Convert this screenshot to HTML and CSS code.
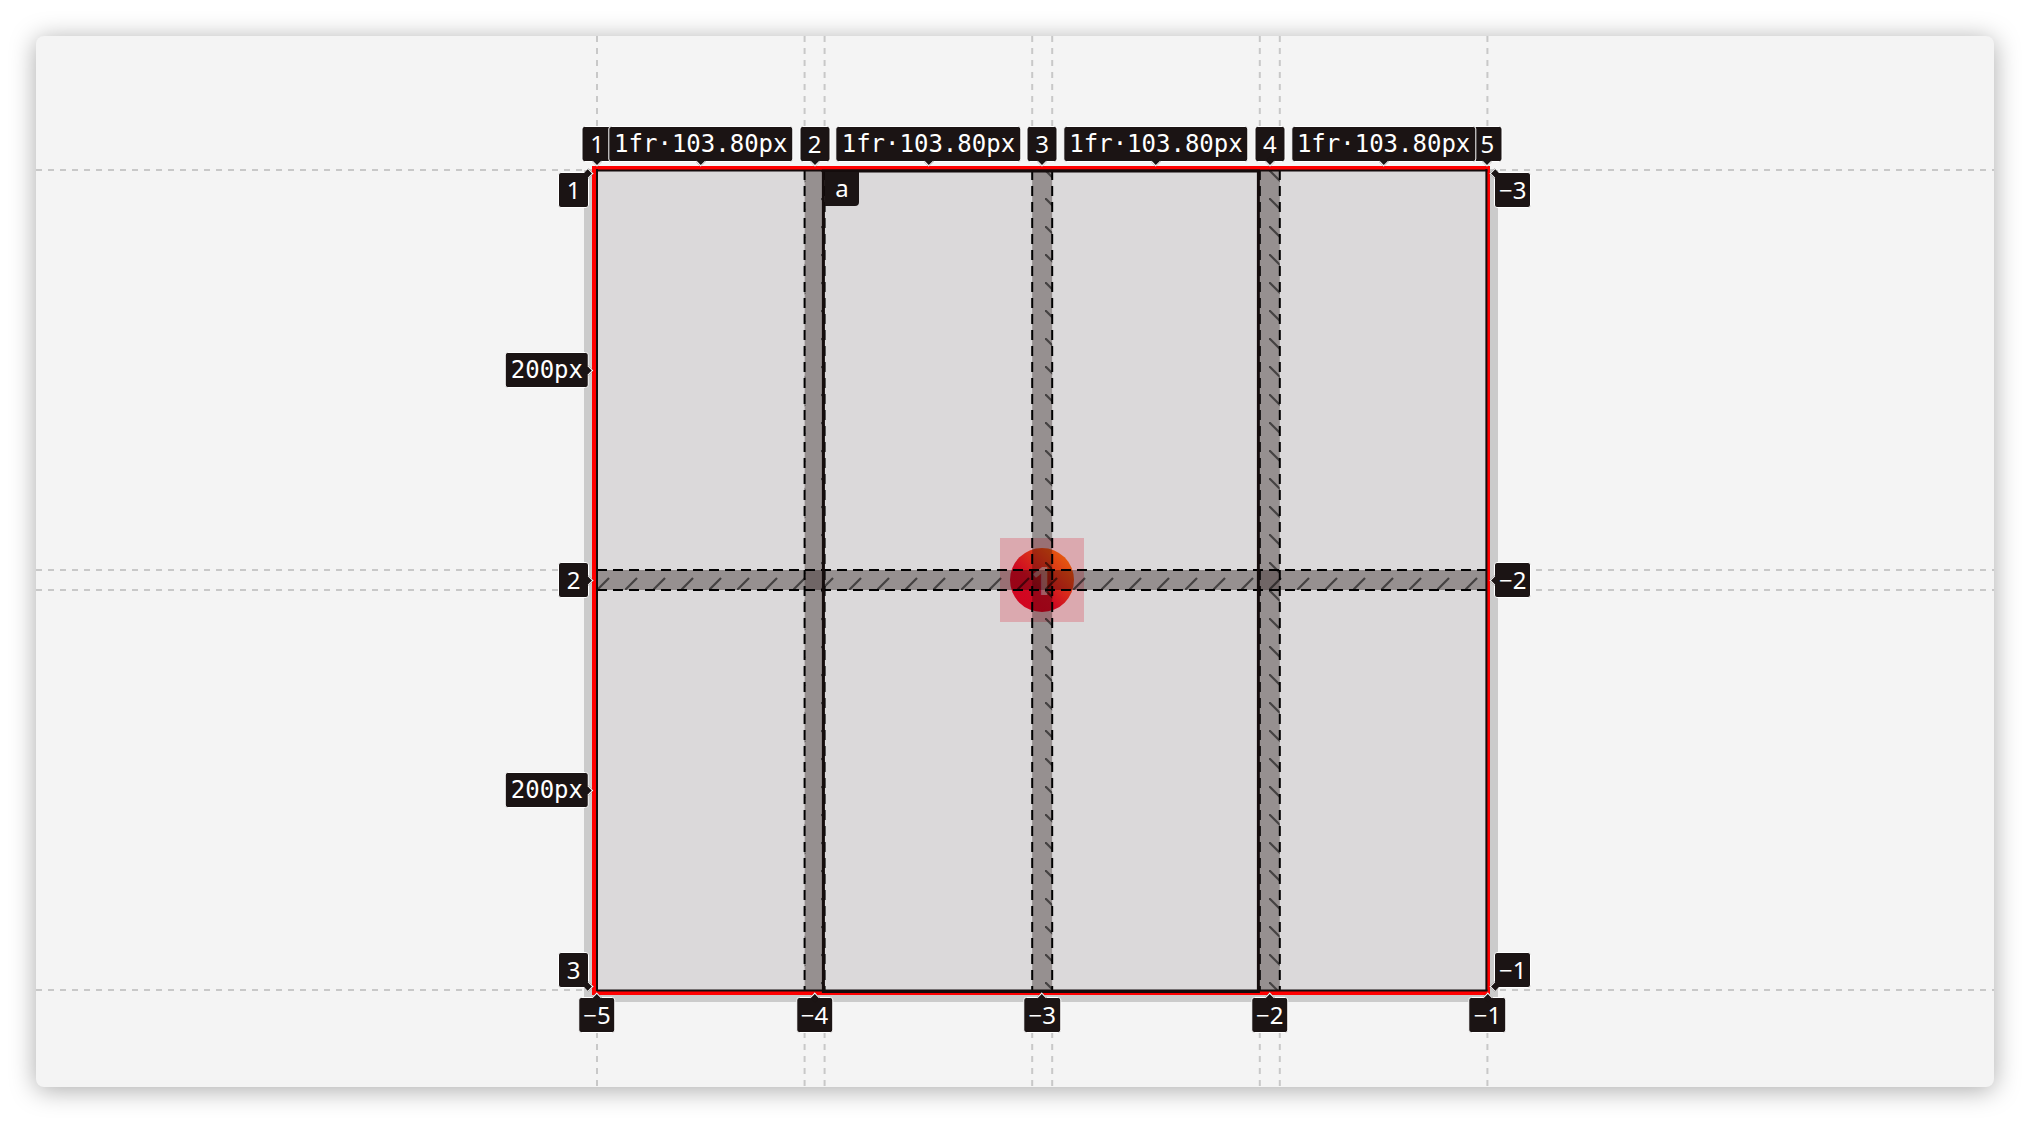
FILE: index.html
```html
<!DOCTYPE html>
<html>
<head>
<meta charset="utf-8">
<title>Grid inspector</title>
<link rel="stylesheet" href="styles.css">
</head>
<body>
<div class="panel">
  <svg class="guides" width="1958" height="1051" viewBox="0 0 1958 1051">
    <g stroke="#c8c8c8" stroke-width="2" stroke-dasharray="6 6">
      <line x1="561" y1="0" x2="561" y2="1051"/>
      <line x1="768.6" y1="0" x2="768.6" y2="1051"/>
      <line x1="788.6" y1="0" x2="788.6" y2="1051"/>
      <line x1="996.2" y1="0" x2="996.2" y2="1051"/>
      <line x1="1016.2" y1="0" x2="1016.2" y2="1051"/>
      <line x1="1223.8" y1="0" x2="1223.8" y2="1051"/>
      <line x1="1243.8" y1="0" x2="1243.8" y2="1051"/>
      <line x1="1451.4" y1="0" x2="1451.4" y2="1051"/>
      <line x1="0" y1="134" x2="1958" y2="134"/>
      <line x1="0" y1="534" x2="1958" y2="534"/>
      <line x1="0" y1="554" x2="1958" y2="554"/>
      <line x1="0" y1="954" x2="1958" y2="954"/>
    </g>
  </svg>

  <div class="stage">
    <div class="grid">
      <div class="cell"></div>
      <div class="cell"></div>
      <div class="cell"></div>
      <div class="cell"></div>
      <div class="cell"></div>
      <div class="cell"></div>
      <div class="cell"></div>
      <div class="cell"></div>
    </div>
    <div class="hit"></div>
    <div class="badge">1</div>
    <svg class="overlay" width="890.4" height="820" viewBox="0 0 890.4 820">
      <defs>
        <pattern id="hc" width="28" height="28" patternUnits="userSpaceOnUse">
          <line x1="0" y1="0" x2="28" y2="28" stroke="rgba(0,0,0,0.55)" stroke-width="2.2" stroke-dasharray="17 22.6"/>
        </pattern>
        <pattern id="hr" width="28" height="28" patternUnits="userSpaceOnUse">
          <line x1="0" y1="28" x2="28" y2="0" stroke="rgba(0,0,0,0.55)" stroke-width="2.2" stroke-dasharray="17 22.6"/>
        </pattern>
      </defs>
      <g fill="rgba(20,0,0,0.29)">
        <rect x="207.6" y="0" width="20" height="820"/>
        <rect x="435.2" y="0" width="20" height="820"/>
        <rect x="662.8" y="0" width="20" height="820"/>
        <rect x="0" y="400" width="890.4" height="20"/>
      </g>
      <g fill="url(#hc)">
        <rect x="207.6" y="0" width="20" height="820"/>
        <rect x="435.2" y="0" width="20" height="820"/>
        <rect x="662.8" y="0" width="20" height="820"/>
      </g>
      <rect x="0" y="400" width="890.4" height="20" fill="url(#hr)"/>
      <g stroke="#000" stroke-width="2" stroke-dasharray="10 6">
        <line x1="207.6" y1="0" x2="207.6" y2="820"/>
        <line x1="227.6" y1="0" x2="227.6" y2="820"/>
        <line x1="435.2" y1="0" x2="435.2" y2="820"/>
        <line x1="455.2" y1="0" x2="455.2" y2="820"/>
        <line x1="662.8" y1="0" x2="662.8" y2="820"/>
        <line x1="682.8" y1="0" x2="682.8" y2="820"/>
        <line x1="0" y1="400" x2="890.4" y2="400"/>
        <line x1="0" y1="420" x2="890.4" y2="420"/>
      </g>
      <rect x="-3" y="-2" width="894" height="825" fill="none" stroke="#ff0000" stroke-width="4"/>
      <g stroke="#140c0c" stroke-width="2">
        <line x1="0" y1="-1" x2="0" y2="821"/>
        <line x1="889.4" y1="-1" x2="889.4" y2="821"/>
        <line x1="0" y1="0.5" x2="890.4" y2="0.5"/>
        <line x1="0" y1="820.5" x2="890.4" y2="820.5"/>
      </g>
      <g stroke="#140c0c" stroke-width="3" fill="none">
        <rect x="226.4" y="1" width="435" height="820.5"/>
      </g>
    </svg>
  </div>

  <div class="lbl num tl l1">1</div>
  <div class="lbl num tl l2">2</div>
  <div class="lbl num tl l3">3</div>
  <div class="lbl num tl l4">4</div>
  <div class="lbl num tl l5">5</div>
  <div class="lbl mono tl k1">1fr·103.80px</div>
  <div class="lbl mono tl k2">1fr·103.80px</div>
  <div class="lbl mono tl k3">1fr·103.80px</div>
  <div class="lbl mono tl k4">1fr·103.80px</div>

  <div class="lbl num bl l1">−5</div>
  <div class="lbl num bl l2">−4</div>
  <div class="lbl num bl l3">−3</div>
  <div class="lbl num bl l4">−2</div>
  <div class="lbl num bl l5">−1</div>

  <div class="lbl num left r1">1</div>
  <div class="lbl mono left mid s1">200px</div>
  <div class="lbl num left mid r2">2</div>
  <div class="lbl mono left mid s2">200px</div>
  <div class="lbl num left r3">3</div>

  <div class="lbl num right r1">−3</div>
  <div class="lbl num right mid r2">−2</div>
  <div class="lbl num right r3">−1</div>

  <div class="lbl num area">a</div>
</div>
</body>
</html>
```

FILE: styles.css
```css
html, body {
  margin: 0;
  padding: 0;
  background: #ffffff;
}

body {
  padding: 36px;
  width: 2030px;
  height: 1124px;
  box-sizing: border-box;
  overflow: hidden;
}

.panel {
  position: relative;
  height: 1051px;
  box-sizing: border-box;
  padding-top: 134px;
  background: #f4f4f4;
  border-radius: 8px;
  box-shadow: 0 3px 26px rgba(0, 0, 0, 0.34);
  overflow: hidden;
}

.guides {
  position: absolute;
  left: 0;
  top: 0;
}

.stage {
  position: relative;
  margin-left: 548px;
  width: fit-content;
  padding: 0 11px 12px 13px;
  background: #cbcbcb;
}

.grid {
  display: grid;
  grid-template-columns: repeat(4, 207.6px);
  grid-template-rows: 400px 400px;
  gap: 20px;
}

.cell {
  background: #dbd9da;
}

.hit {
  position: absolute;
  left: 416.2px;
  top: 368px;
  width: 84px;
  height: 84px;
  background: rgba(222, 30, 55, 0.26);
}

.badge {
  position: absolute;
  left: 426.2px;
  top: 378px;
  width: 64px;
  height: 64px;
  border-radius: 50%;
  background: linear-gradient(45deg, #d4001e 0%, #cf0a22 40%, #e4560f 85%, #e8680a 100%);
  color: rgba(235, 235, 235, 0.55);
  font: 700 40px/64px "Noto Sans", sans-serif;
  text-align: center;
}

.overlay {
  position: absolute;
  left: 13px;
  top: 0;
  overflow: visible;
}

/* labels */
.lbl {
  position: absolute;
  box-sizing: border-box;
  height: 36px;
  min-width: 31px;
  padding: 0 4px;
  background: #1b1414;
  color: #ffffff;
  border: 1px solid #ffffff;
  border-radius: 3px;
  font-size: 24px;
  line-height: 34px;
  text-align: center;
  white-space: nowrap;
}

.num {
  font-family: "Noto Sans", sans-serif;
}

.mono {
  font-family: "DejaVu Sans Mono", monospace;
  padding: 0 5px;
}

.lbl::after {
  content: "";
  position: absolute;
  width: 7px;
  height: 7px;
  background: #1b1414;
  box-sizing: border-box;
}

/* top row */
.tl {
  top: 90px;
  transform: translateX(-50%);
}
.tl::after {
  left: 50%;
  bottom: -4px;
  margin-left: -3.5px;
  transform: rotate(45deg);
  border-right: 1px solid #fff;
  border-bottom: 1px solid #fff;
}

/* bottom row */
.bl {
  top: 961px;
  transform: translateX(-50%);
}
.bl::after {
  left: 50%;
  top: -4px;
  margin-left: -3.5px;
  transform: rotate(45deg);
  border-left: 1px solid #fff;
  border-top: 1px solid #fff;
}

.l1 { left: 561px; }
.l2 { left: 778.6px; }
.l3 { left: 1006.2px; }
.l4 { left: 1233.8px; }
.l5 { left: 1451.4px; }

.k1 { left: 664.8px; }
.k2 { left: 892.4px; }
.k3 { left: 1120px; }
.k4 { left: 1347.6px; }

/* left column */
.left {
  left: 553px;
  transform: translateX(-100%);
}
.left.mid {
  transform: translate(-100%, -50%);
}
.left::after {
  right: -4px;
  top: 50%;
  margin-top: -3.5px;
  transform: rotate(45deg);
  border-right: 1px solid #fff;
  border-top: 1px solid #fff;
}
.left.r1::after {
  top: -3px;
  margin-top: 0;
}
.left.r3::after {
  top: auto;
  bottom: -3px;
  margin-top: 0;
}

/* right column */
.right {
  left: 1458px;
}
.right.mid {
  transform: translateY(-50%);
}
.right::after {
  left: -4px;
  top: 50%;
  margin-top: -3.5px;
  transform: rotate(45deg);
  border-left: 1px solid #fff;
  border-bottom: 1px solid #fff;
}
.right.r1::after {
  top: -3px;
  margin-top: 0;
}
.right.r3::after {
  top: auto;
  bottom: -3px;
  margin-top: 0;
}

.r1 { top: 136px; }
.r2 { top: 544px; }
.r3 { top: 916px; }
.s1 { top: 334px; }
.s2 { top: 754px; }

.area {
  left: 789px;
  top: 136px;
  height: 34px;
  line-height: 32px;
  min-width: 34px;
  border: none;
  border-radius: 0 0 4px 0;
}
.area::after {
  display: none;
}
```
